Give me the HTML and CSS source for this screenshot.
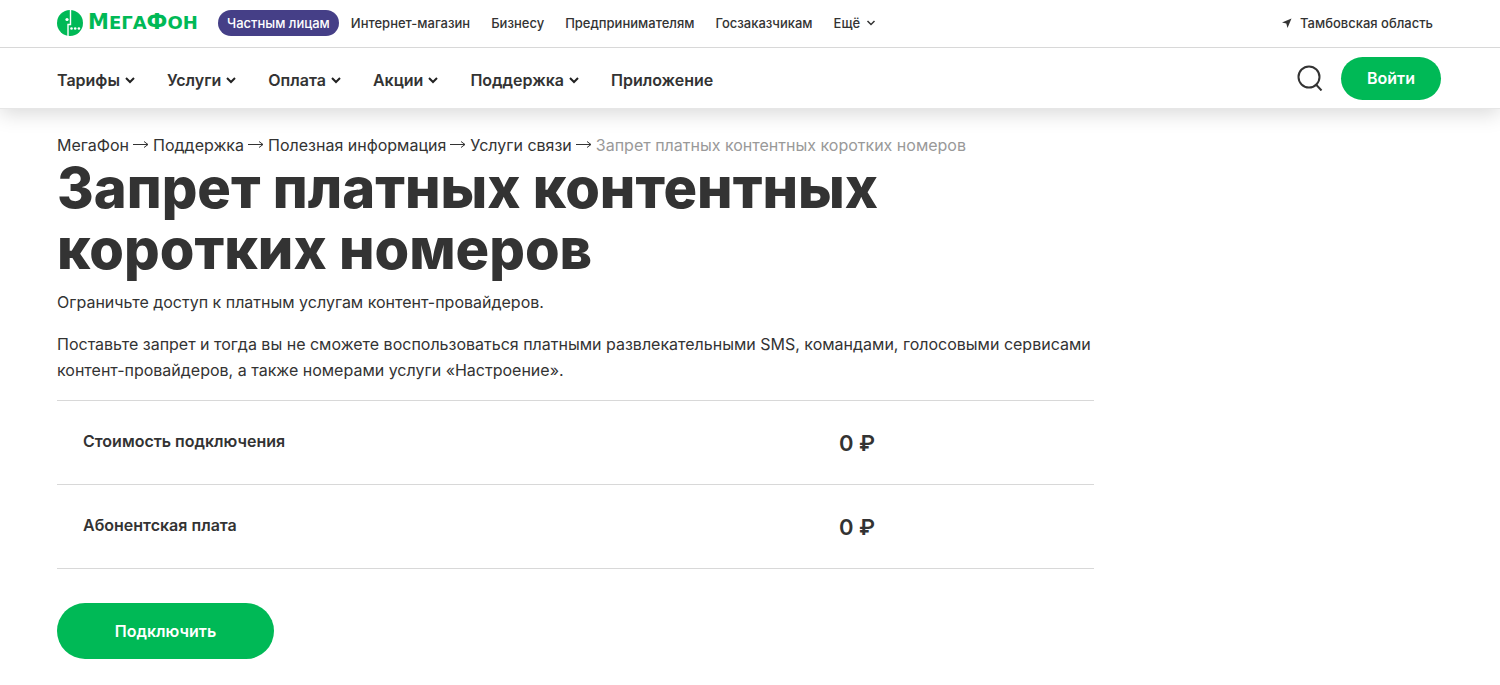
FILE: index.html
```html
<!DOCTYPE html>
<html lang="ru">
<head>
<meta charset="utf-8">
<meta name="viewport" content="width=device-width, initial-scale=1">
<title>Запрет платных контентных коротких номеров — МегаФон</title>
<link rel="stylesheet" href="styles.css">
</head>
<body>
<header class="header">
  <div class="topbar">
    <a class="logo" href="#">
      <svg class="logo-mark" viewBox="0 0 26 26" aria-hidden="true">
        <circle cx="13" cy="13" r="13" fill="#00b956"/>
        <path d="M13.500 0v14.500H11V26" stroke="#fff" stroke-width="1.400" fill="none"/>
        <g fill="#fff"><circle cx="10" cy="9.500" r="1.600"/><circle cx="14.500" cy="18.500" r="1.300"/><circle cx="18.200" cy="18.500" r="1.300"/><circle cx="21.900" cy="18.500" r="1.300"/></g>
      </svg>
      <span class="logo-text"><span class="logo-cap">М</span>ЕГА<span class="logo-cap">Ф</span>ОН</span>
    </a>
    <nav class="segments">
      <a class="segment segment-active" href="#">Частным лицам</a>
      <a class="segment" href="#">Интернет-магазин</a>
      <a class="segment" href="#">Бизнесу</a>
      <a class="segment" href="#">Предпринимателям</a>
      <a class="segment" href="#">Госзаказчикам</a>
      <button class="segment segment-more" type="button">Ещё <svg class="chevron-small" viewBox="0 0 10 10" aria-hidden="true"><path d="M1.500 3l3.500 3.500L8.500 3"/></svg></button>
    </nav>
    <a class="region" href="#">
      <svg class="region-icon" viewBox="0 0 10 10" aria-hidden="true"><path d="M9.500 .5L0 4.500l4.300 1L5.500 10z" fill="#333"/></svg>
      Тамбовская область
    </a>
  </div>
  <div class="mainbar">
    <nav class="menu">
      <button class="menu-item" type="button">Тарифы <svg class="chevron" viewBox="0 0 10 10" aria-hidden="true"><path d="M1 3l4 4 4-4"/></svg></button>
      <button class="menu-item" type="button">Услуги <svg class="chevron" viewBox="0 0 10 10" aria-hidden="true"><path d="M1 3l4 4 4-4"/></svg></button>
      <button class="menu-item" type="button">Оплата <svg class="chevron" viewBox="0 0 10 10" aria-hidden="true"><path d="M1 3l4 4 4-4"/></svg></button>
      <button class="menu-item" type="button">Акции <svg class="chevron" viewBox="0 0 10 10" aria-hidden="true"><path d="M1 3l4 4 4-4"/></svg></button>
      <button class="menu-item" type="button">Поддержка <svg class="chevron" viewBox="0 0 10 10" aria-hidden="true"><path d="M1 3l4 4 4-4"/></svg></button>
      <a class="menu-item" href="#">Приложение</a>
    </nav>
    <button class="search" type="button" aria-label="Поиск">
      <svg class="search-icon" viewBox="0 0 26 26" aria-hidden="true"><circle cx="12" cy="12" r="10.500"/><path d="M18.500 19l6 6.500"/></svg>
    </button>
    <button class="login" type="button">Войти</button>
  </div>
</header>
<main class="page">
  <nav class="crumbs" aria-label="Навигация">
    <a href="#">МегаФон</a>
    <svg class="arrow" viewBox="0 0 16 10" aria-hidden="true"><path d="M0 4.500h15M11 1.500l4 3-4 3"/></svg>
    <a href="#">Поддержка</a>
    <svg class="arrow" viewBox="0 0 16 10" aria-hidden="true"><path d="M0 4.500h15M11 1.500l4 3-4 3"/></svg>
    <a href="#">Полезная информация</a>
    <svg class="arrow" viewBox="0 0 16 10" aria-hidden="true"><path d="M0 4.500h15M11 1.500l4 3-4 3"/></svg>
    <a href="#">Услуги связи</a>
    <svg class="arrow" viewBox="0 0 16 10" aria-hidden="true"><path d="M0 4.500h15M11 1.500l4 3-4 3"/></svg>
    <span class="crumb-current">Запрет платных контентных коротких номеров</span>
  </nav>
  <div class="content">
    <h1 class="title">Запрет платных контентных коротких номеров</h1>
    <p class="text">Ограничьте доступ к платным услугам контент-провайдеров.</p>
    <p class="text">Поставьте запрет и тогда вы не сможете воспользоваться платными развлекательными SMS, командами, голосовыми сервисами контент-провайдеров, а также номерами услуги «Настроение».</p>
    <table class="prices">
      <tbody>
        <tr><th scope="row">Стоимость подключения</th><td>0 ₽</td></tr>
        <tr><th scope="row">Абонентская плата</th><td>0 ₽</td></tr>
      </tbody>
    </table>
    <button class="connect" type="button">Подключить</button>
  </div>
</main>
</body>
</html>
```
FILE: styles.css
```css
* {
  box-sizing: border-box;
}

body {
  margin: 0;
  background: #fff;
  color: #333;
  font-family: Inter, "Liberation Sans", sans-serif;
  font-size: 16px;
}

a {
  color: inherit;
  text-decoration: none;
}

button {
  margin: 0;
  padding: 0;
  border: 0;
  background: none;
  color: inherit;
  font: inherit;
  cursor: pointer;
}

.header {
  border-bottom: 1px solid #e6e6e6;
  box-shadow: 0 4px 20px rgba(0, 0, 0, 0.16);
}

.topbar {
  display: flex;
  align-items: center;
  height: 48px;
  padding: 0 67px 2px 57px;
  border-bottom: 1px solid #d8d8d8;
}

.logo {
  display: flex;
  align-items: center;
  gap: 5px;
  width: 161px;
  color: #00b956;
}

.logo-mark {
  flex: none;
  width: 26px;
  height: 26px;
}

.logo-text {
  font: bold 18px/20px "DejaVu Sans", sans-serif;
}

.logo-cap {
  font-size: 21px;
}

.segments {
  display: flex;
  align-items: center;
  gap: 3px;
}

.segment {
  display: flex;
  align-items: center;
  padding: 0 9px;
  border-radius: 13px;
  font-size: 13px;
  font-weight: 500;
  line-height: 26px;
  white-space: nowrap;
}

.segment-active {
  background: #453f87;
  color: #fff;
}

.segment-more {
  gap: 6px;
}

.chevron-small,
.chevron {
  width: 10px;
  height: 10px;
  fill: none;
  stroke: #333;
  stroke-width: 1.5;
}

.chevron {
  stroke: #222;
  stroke-width: 2;
}

.region {
  display: flex;
  align-items: center;
  gap: 8px;
  margin-left: auto;
  font-size: 13px;
  font-weight: 500;
}

.region-icon {
  width: 10px;
  height: 10px;
}

.mainbar {
  display: flex;
  align-items: center;
  height: 60px;
  padding: 0 59px 0 57px;
}

.menu {
  display: flex;
  gap: 32px;
  padding-top: 4px;
}

.menu-item {
  display: flex;
  align-items: center;
  gap: 5px;
  font-size: 16px;
  font-weight: 600;
  line-height: 20px;
}

.search {
  display: flex;
  margin: 0 18px 0 auto;
}

.search-icon {
  width: 26px;
  height: 26px;
  fill: none;
  stroke: #333;
  stroke-width: 2;
}

.login,
.connect {
  border-radius: 28px;
  background: #00b956;
  color: #fff;
  font-size: 16px;
  font-weight: 600;
}

.login {
  padding: 0 26px;
  line-height: 43px;
}

.page {
  padding: 24px 57px;
}

.crumbs {
  display: flex;
  align-items: center;
  gap: 4px;
  line-height: 24px;
}

.arrow {
  width: 16px;
  height: 10px;
  fill: none;
  stroke: #333;
}

.crumb-current {
  color: #999;
}

.content {
  max-width: 1037px;
}

.title {
  margin: 1px 0 9px;
  font-size: 56px;
  font-weight: 800;
  line-height: 61px;
}

.text {
  margin: 0 0 16px;
  line-height: 26px;
}

.prices {
  width: 100%;
  margin-top: 17px;
  border-collapse: collapse;
}

.prices tr {
  height: 84px;
  border-top: 1px solid #d8d8d8;
  border-bottom: 1px solid #d8d8d8;
}

.prices th {
  padding: 0 0 4px 26px;
  font-weight: 600;
  text-align: left;
}

.prices td {
  width: 255px;
  padding: 0;
  font-size: 22px;
  font-weight: 600;
}

.connect {
  min-width: 217px;
  margin-top: 34px;
  line-height: 56px;
}
```
